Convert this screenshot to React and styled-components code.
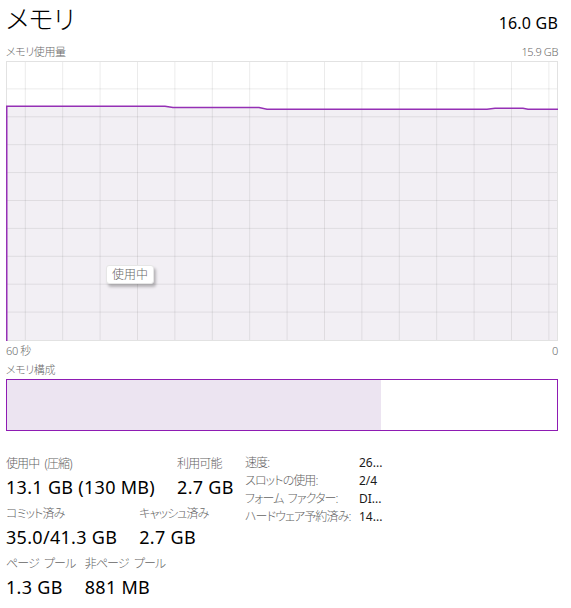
import React from 'react';
import styled, { createGlobalStyle } from 'styled-components';

const GlobalStyle = createGlobalStyle`
  html, body {
    margin: 0;
    padding: 0;
    background: #ffffff;
  }
  body {
    font-family: "Noto Sans", "Noto Sans CJK JP", sans-serif;
    font-feature-settings: "palt";
    color: #000;
  }
`;

const Page = styled.div`
  width: 571px;
  height: 608px;
  box-sizing: border-box;
  padding: 0 13px 0 6px;
  overflow: hidden;
`;

const HeadRow = styled.div`
  display: flex;
  justify-content: space-between;
  align-items: ${p => (p.bottom ? 'flex-end' : 'baseline')};
  height: ${p => p.h}px;
  margin-top: ${p => p.top || 0}px;
`;

const Title = styled.h1`
  margin: 0;
  font-size: 26px;
  font-weight: 300;
  line-height: 38px;
`;

const Total = styled.span`
  font-size: 16px;
  letter-spacing: 0.2px;
`;

const Caption = styled.span`
  font-size: 11px;
  font-weight: 300;
  color: #6a6a6a;
  line-height: 16px;
  letter-spacing: -0.4px;
`;

const Graph = styled.div`
  position: relative;
  height: 280px;
  margin-top: 1px;
  svg {
    display: block;
  }
`;

const Tooltip = styled.div`
  position: absolute;
  left: 100px;
  top: 204px;
  padding: 1px 5px 1px;
  background: #fff;
  border: 1px solid #e6e6e6;
  border-radius: 3px;
  box-shadow: 2px 3px 3px rgba(0, 0, 0, 0.25);
  font-size: 12px;
  font-weight: 300;
  color: #666;
  line-height: 15px;
`;

const CompBar = styled.div`
  display: flex;
  height: 50px;
  border: 1px solid #8e1bb3;
`;

const CompFill = styled.div`
  background: #ece4f1;
`;

const Stats = styled.div`
  display: flex;
  margin-top: 25px;
`;

const StatsLeft = styled.div`
  width: 239px;
  flex: none;
`;

const StatRow = styled.div`
  display: flex;
  gap: 22px;
  margin-bottom: 7px;
`;

const Stat = styled.div`
  display: flex;
  flex-direction: column;
  gap: 3px;
`;

/* label may run past its value, as in the original layout */
const Label = styled.span`
  contain: inline-size;
  font-size: 12px;
  font-weight: 300;
  line-height: 16px;
  color: #646464;
  letter-spacing: -0.9px;
  word-spacing: 3px;
  white-space: nowrap;
`;

const Value = styled.span`
  font-size: 18px;
  line-height: 24px;
  letter-spacing: 0.3px;
  white-space: nowrap;
`;

const Props = styled.div`
  display: grid;
  grid-template-columns: 114px auto;
  grid-auto-rows: 18px;
  align-items: center;
  margin-top: -3px;
  font-size: 12px;
`;

const PropKey = styled.span`
  color: #646464;
  font-weight: 300;
  letter-spacing: -0.9px;
  word-spacing: 2px;
  white-space: nowrap;
`;

const PropVal = styled.span`
  color: #1a1a1a;
`;

const W = 552;
const H = 280;
const points = [
  [0, 45.3], [159, 45.3], [167, 46.6], [253, 46.6], [261, 48.3],
  [481, 48.3], [489, 47.3], [517, 47.3], [522, 48.3], [W, 48.3]
];

function UsageChart() {
  const line = points.map((p, i) => `${i ? 'L' : 'M'}${p[0]},${p[1]}`).join(' ');
  const vx = [];
  for (let x = 19.3; x < W; x += 37.4) vx.push(x);
  const hy = [];
  for (let i = 1; i < 10; i++) hy.push(i * 27.9);
  return (
    <svg width={W} height={H} viewBox={`0 0 ${W} ${H}`}>
      <rect x="0" y="0" width={W} height={H} fill="#fff" />
      <path d={`${line} L${W},${H} L0,${H} Z`} fill="#f2eff4" />
      {vx.map(x => (
        <line key={x} x1={x} x2={x} y1="0" y2={H} stroke="rgba(0,0,0,0.08)" strokeWidth="1" />
      ))}
      {hy.map(y => (
        <line key={y} x1="0" x2={W} y1={y} y2={y} stroke="rgba(0,0,0,0.08)" strokeWidth="1" />
      ))}
      <rect x="0.5" y="0.5" width={W - 1} height={H - 1} fill="none" stroke="#e2e2e2" />
      <path d={`M0.75,${H} L0.75,45.3 ${line}`} fill="none" stroke="#9530b5" strokeWidth="1.5" />
    </svg>
  );
}

const rows = [
  [['使用中 (圧縮)', '13.1 GB (130 MB)'], ['利用可能', '2.7 GB']],
  [['コミット済み', '35.0/41.3 GB'], ['キャッシュ済み', '2.7 GB']],
  [['ページ プール', '1.3 GB'], ['非ページ プール', '881 MB']]
];

const props = [
  ['速度:', '26...'],
  ['スロットの使用:', '2/4'],
  ['フォーム ファクター:', 'DI...'],
  ['ハードウェア予約済み:', '14...']
];

export default function App() {
  return (
    <Page>
      <GlobalStyle />
      <HeadRow h={42}>
        <Title>メモリ</Title>
        <Total>16.0 GB</Total>
      </HeadRow>
      <HeadRow h={18} bottom>
        <Caption>メモリ使用量</Caption>
        <Caption>15.9 GB</Caption>
      </HeadRow>
      <Graph>
        <UsageChart />
        <Tooltip>使用中</Tooltip>
      </Graph>
      <HeadRow h={19} top={2}>
        <Caption>60 秒</Caption>
        <Caption>0</Caption>
      </HeadRow>
      <HeadRow h={17}>
        <Caption>メモリ構成</Caption>
      </HeadRow>
      <CompBar>
        <CompFill style={{ width: '68%' }} />
      </CompBar>
      <Stats>
        <StatsLeft>
          {rows.map((r, i) => (
            <StatRow key={i}>
              {r.map(([l, v]) => (
                <Stat key={l}>
                  <Label>{l}</Label>
                  <Value>{v}</Value>
                </Stat>
              ))}
            </StatRow>
          ))}
        </StatsLeft>
        <Props>
          {props.map(([k, v]) => (
            <React.Fragment key={k}>
              <PropKey>{k}</PropKey>
              <PropVal>{v}</PropVal>
            </React.Fragment>
          ))}
        </Props>
      </Stats>
    </Page>
  );
}
